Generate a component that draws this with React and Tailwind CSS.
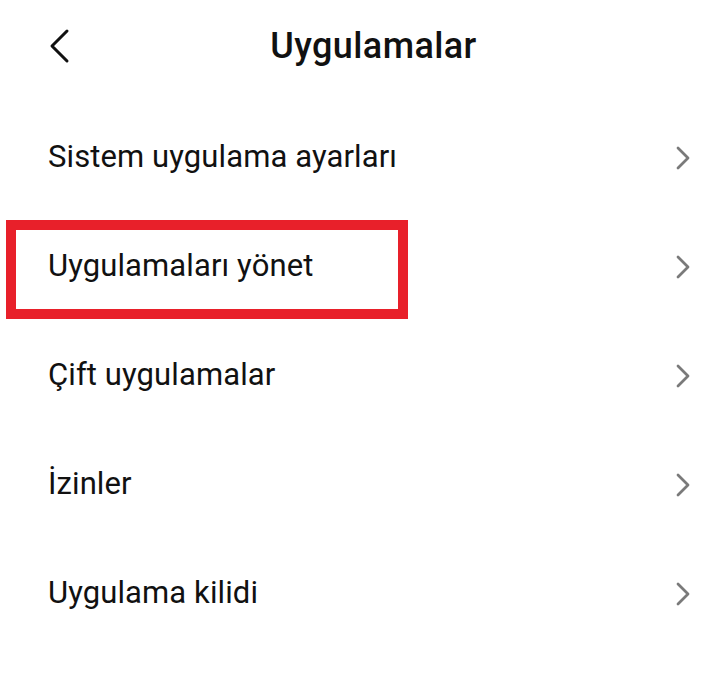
import React from "react";

const items = [
  "Sistem uygulama ayarları",
  "Uygulamaları yönet",
  "Çift uygulamalar",
  "İzinler",
  "Uygulama kilidi",
];

const Chevron = () => (
  <svg width="16" height="26" viewBox="0 0 16 26" fill="none">
    <path d="M3 3 L13 13 L3 23" stroke="#7a7a7a" strokeWidth="2.8" strokeLinecap="round" strokeLinejoin="round" />
  </svg>
);

export default function App() {
  return (
    <div className="w-[713px] h-[682px] bg-white overflow-hidden font-['Roboto',sans-serif] text-[#111]">
      <div className="relative flex items-center h-[92px] px-[48px]">
        <button className="w-[24px] h-[36px] flex items-center">
          <svg width="22" height="36" viewBox="0 0 22 36" fill="none">
            <path d="M19 3 L4 18 L19 33" stroke="#111" strokeWidth="3" strokeLinecap="round" strokeLinejoin="round" />
          </svg>
        </button>
        <h1 className="flex-1 text-center pl-[10px] text-[36px] font-medium tracking-[0.4px]">Uygulamalar</h1>
      </div>
      <div className="flex flex-col pt-[11px]">
        {items.map((label, i) => (
          <div key={label} className="relative flex items-center justify-between h-[109px] pl-[48px] pr-[22px]">
            <span className="text-[31px] tracking-[0.1px]">{label}</span>
            <Chevron />
            {i === 1 && (
              <div className="absolute left-[6px] top-[8px] w-[402px] h-[99px] border-[10px] border-[#e8202a]" />
            )}
          </div>
        ))}
      </div>
    </div>
  );
}
